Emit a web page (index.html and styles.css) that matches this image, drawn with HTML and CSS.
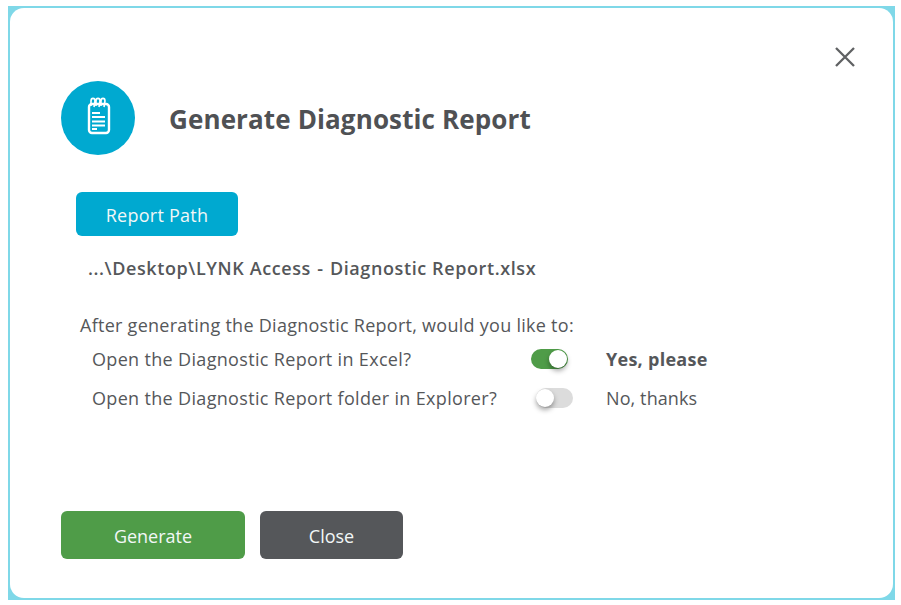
FILE: index.html
```html
<!DOCTYPE html>
<html lang="en">
<head>
<meta charset="UTF-8">
<title>Generate Diagnostic Report</title>
<link rel="stylesheet" href="styles.css">
</head>
<body>
    <div class="frame">
        <div class="dialog">
            <div class="close-row">
                <svg class="close-icon" width="22" height="20" viewBox="0 0 22 20">
                    <path d="M2 1 L20 19 M20 1 L2 19" stroke="#5f6163" stroke-width="2.3" fill="none"/>
                </svg>
            </div>
            <div class="header">
                <div class="header-icon">
                    <svg width="30" height="42" viewBox="0 0 30 42">
                        <rect x="6" y="7" width="20" height="29" rx="3" fill="none" stroke="#fff" stroke-width="2.4"/>
                        <path d="M8 9 V4 C8 0.5 12 0.5 12 4 L11 10 M13 9 V4 C13 0.5 17 0.5 17 4 L16 10 M18 9 V4 C18 0.5 22 0.5 22 4 L21 10" fill="none" stroke="#fff" stroke-width="1.6"/>
                        <path d="M9 16 H17 M9 20 H22 M9 24.5 H22 M9 28.5 H22 M9 32 H14" stroke="#fff" stroke-width="2.1"/>
                    </svg>
                </div>
                <h1>Generate Diagnostic Report</h1>
            </div>
            <div class="path-block">
                <button class="btn btn-path">Report Path</button>
                <p class="path-text">...\Desktop\LYNK Access <span class="dash">-</span> Diagnostic Report.xlsx</p>
            </div>
            <div class="options">
                <p class="question">After generating the Diagnostic Report, would you like to:</p>
                <div class="option">
                    <span class="option-label">Open the Diagnostic Report in Excel?</span>
                    <span class="toggle on"><span class="knob"></span></span>
                    <span class="option-value strong">Yes, please</span>
                </div>
                <div class="option">
                    <span class="option-label">Open the Diagnostic Report folder in Explorer?</span>
                    <span class="toggle off"><span class="knob"></span></span>
                    <span class="option-value">No, thanks</span>
                </div>
            </div>
            <div class="footer">
                <button class="btn btn-generate">Generate</button>
                <button class="btn btn-close">Close</button>
            </div>
        </div>
    </div>
</body>
</html>
```

FILE: styles.css
```css
body {
    margin: 0;
    background: white;
    font-family: "Open Sans", "Noto Sans", sans-serif;
    color: #55575a;
}

.frame {
    width: 887px;
    height: 594px;
    margin: 6px 0 0 8px;
    padding: 2px;
    box-sizing: border-box;
    background: #7fd8e8;
}

.dialog {
    height: 100%;
    background: white;
    border-radius: 14px;
    padding: 0 0 0 51px;
    box-sizing: border-box;
    display: flex;
    flex-direction: column;
}

.close-row {
    display: flex;
    justify-content: flex-end;
    padding: 39px 37px 0 0;
    height: 34px;
}

.close-icon {
    display: block;
}

.header {
    display: flex;
    align-items: center;
    gap: 34px;
}

.header-icon {
    width: 74px;
    height: 74px;
    border-radius: 50%;
    background: #00a9d0;
    display: flex;
    align-items: center;
    justify-content: center;
}

h1 {
    margin: 2px 0 0;
    font-size: 26px;
    font-weight: 700;
    letter-spacing: 0.12px;
    color: #4f5154;
}

.path-block {
    padding: 37px 0 0 15px;
}

.btn {
    border: none;
    color: #f2f7f7;
    font-family: inherit;
    font-size: 18px;
    border-radius: 6px;
    padding: 1px 0 0;
}

.btn-path {
    width: 162px;
    height: 44px;
    background: #00a9d0;
    letter-spacing: 0.25px;
}

.path-text {
    margin: 20px 0 0 12px;
    font-size: 18px;
    font-weight: 600;
    line-height: 24px;
    letter-spacing: 0.6px;
}

.dash {
    margin: 0 1px;
}

.options {
    padding: 32px 0 0 19px;
    font-size: 18px;
    letter-spacing: 0.27px;
}

.question {
    margin: 0;
    line-height: 26px;
}

.option {
    display: flex;
    align-items: center;
    height: 39px;
    padding-left: 12px;
    margin-top: 1px;
}

.option + .option {
    margin-top: 0;
}

.option-label {
    width: 439px;
    letter-spacing: 0.33px;
}

.toggle {
    position: relative;
    width: 37px;
    height: 20px;
    border-radius: 10px;
    background: #dcdcdc;
    margin-right: 38px;
}

.toggle.on {
    background: #4f9c48;
}

.toggle.off {
    transform: translateX(5px);
}

.knob {
    position: absolute;
    left: 0;
    top: 1px;
    width: 18px;
    height: 18px;
    border-radius: 50%;
    background: white;
    box-shadow: 0 3px 5px rgba(0, 0, 0, 0.35);
}

.toggle.on .knob {
    left: 18px;
}

.option-value {
    letter-spacing: 0.1px;
}

.option-value.strong {
    font-weight: 700;
    letter-spacing: 0.27px;
}

.footer {
    display: flex;
    gap: 15px;
    margin-top: auto;
    padding-bottom: 39px;
}

.btn-generate {
    width: 184px;
    height: 48px;
    background: #4f9c48;
}

.btn-close {
    width: 143px;
    height: 48px;
    background: #55575a;
}
```
